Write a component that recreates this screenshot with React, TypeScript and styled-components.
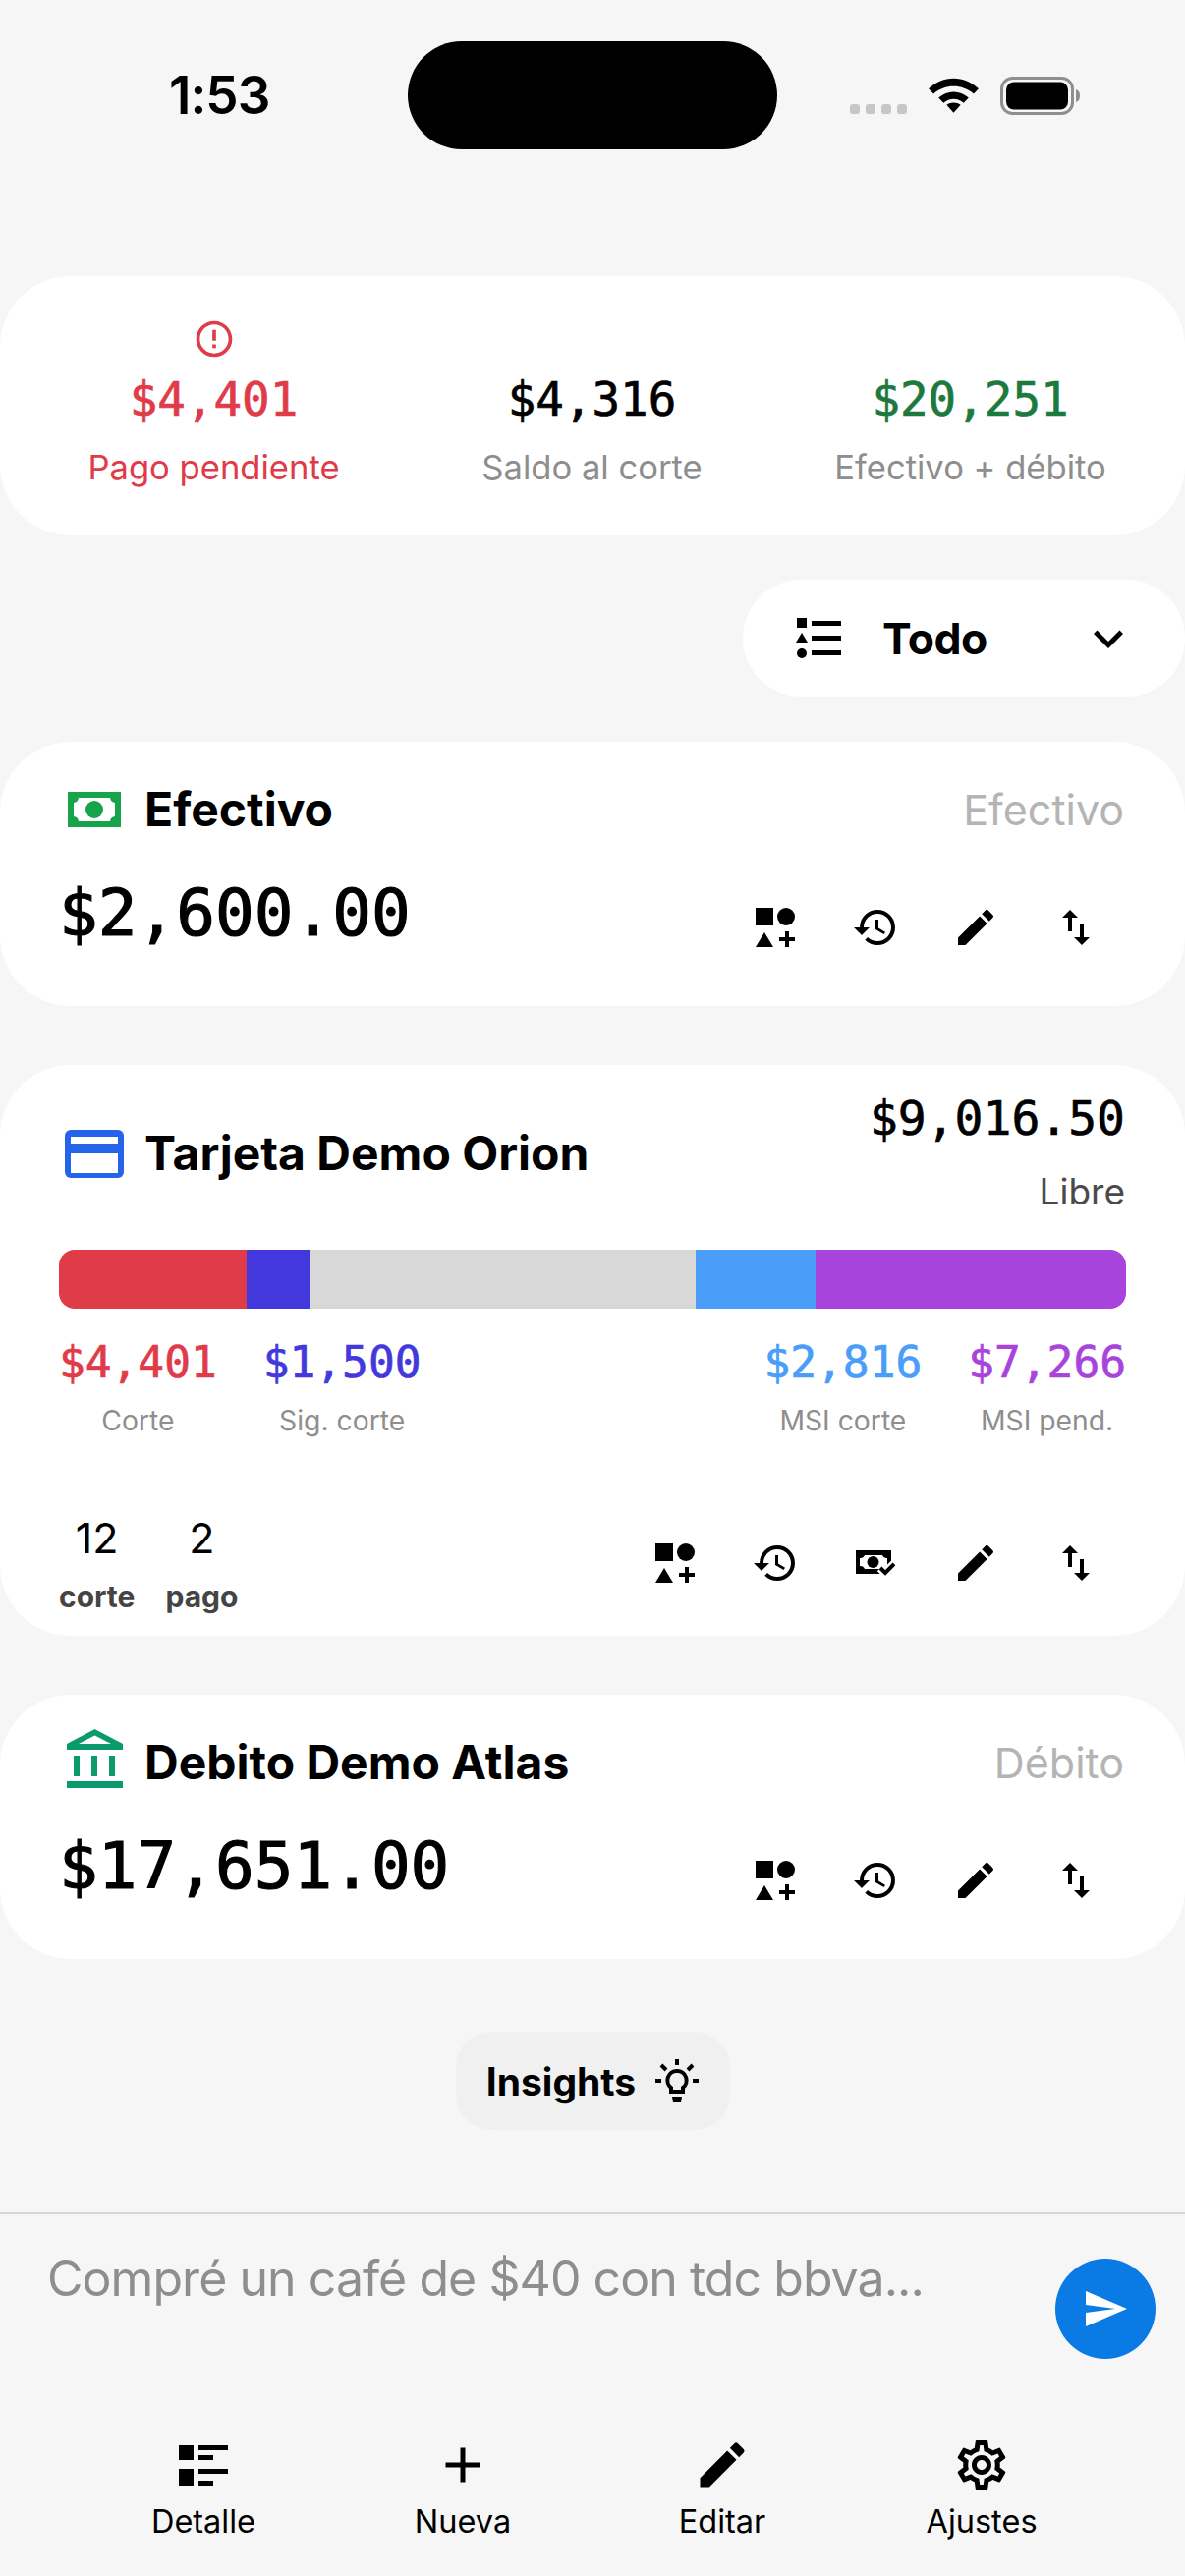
import React from "react";
import styled, { createGlobalStyle } from "styled-components";
import {
  MdAdd,
  MdEdit,
  MdErrorOutline,
  MdHistory,
  MdKeyboardArrowDown,
  MdOutlineSettings,
  MdSend,
  MdSwapVert,
} from "react-icons/md";

const MONO = `"DejaVu Sans Mono", "Liberation Mono", monospace`;

const GlobalStyle = createGlobalStyle`
  html, body {
    margin: 0;
    padding: 0;
    background: #f6f6f6;
  }
  body {
    font-family: Inter, "Liberation Sans", sans-serif;
    color: #000;
  }
`;

const Screen = styled.div`
  width: 1206px;
  height: 2622px;
  overflow: hidden;
  background: #f6f6f6;
  display: flex;
  flex-direction: column;
`;

const StatusBar = styled.div`
  height: 281px;
  flex-shrink: 0;
  padding: 42px 0 0 172px;
  box-sizing: border-box;
  display: flex;
  align-items: flex-start;
`;

const Time = styled.div`
  width: 243px;
  font-size: 53px;
  line-height: 110px;
  font-weight: 600;
  letter-spacing: -1px;
`;

const Island = styled.div`
  width: 376px;
  height: 110px;
  border-radius: 55px;
  background: #000;
`;

const StatusIcons = styled.div`
  margin-left: 74px;
  height: 110px;
  display: flex;
  align-items: center;
  gap: 22px;
`;

const SignalDots = styled.div`
  display: flex;
  gap: 6px;
  align-self: flex-end;
  margin-bottom: 36px;
`;

const SignalDot = styled.span`
  width: 10px;
  height: 10px;
  border-radius: 3px;
  background: #c6c6c6;
`;

const Summary = styled.section`
  height: 264px;
  flex-shrink: 0;
  box-sizing: border-box;
  background: #fff;
  border-radius: 72px;
  padding: 44px 26px 0 25px;
  display: grid;
  grid-template-columns: repeat(3, 1fr);
`;

const SummaryItem = styled.div`
  display: flex;
  flex-direction: column;
  align-items: center;
  white-space: nowrap;
`;

const AlertSlot = styled.div`
  height: 40px;
  color: #e03b49;
  font-size: 44px;
  display: flex;
  align-items: center;
`;

const SummaryValue = styled.div<{ $color: string }>`
  color: ${({ $color }) => $color};
  font-family: ${MONO};
  font-size: 47.5px;
  line-height: 60px;
  -webkit-text-stroke: 0.7px ${({ $color }) => $color};
  margin-top: 12px;
`;

const SummaryLabel = styled.div<{ $color: string }>`
  color: ${({ $color }) => $color};
  font-size: 34.6px;
  line-height: 44px;
  margin-top: 16px;
`;

const FilterRow = styled.div`
  display: flex;
  justify-content: flex-end;
  margin-top: 45px;
  flex-shrink: 0;
`;

const Filter = styled.div`
  width: 450px;
  height: 119px;
  box-sizing: border-box;
  background: #fff;
  border-radius: 60px;
  display: flex;
  align-items: center;
  padding: 0 48px 0 54px;

  svg {
    flex-shrink: 0;
  }
`;

const FilterLabel = styled.div`
  flex: 1;
  margin-left: 42px;
  font-size: 44.5px;
  font-weight: 700;
  letter-spacing: -0.5px;
`;

const Card = styled.section<{ $height: number; $top: number }>`
  height: ${({ $height }) => $height}px;
  margin-top: ${({ $top }) => $top}px;
  flex-shrink: 0;
  box-sizing: border-box;
  background: #fff;
  border-radius: 72px;
  padding: 0 60px;
  display: flex;
  flex-direction: column;
`;

const CardHeader = styled.div`
  display: flex;
  align-items: center;
  justify-content: space-between;
  height: 50px;
  margin-top: 44px;
`;

const CardTitleGroup = styled.div`
  display: flex;
  align-items: center;
  gap: 21px;
`;

const CardIcon = styled.div`
  width: 60px;
  margin-left: 6px;
  display: flex;
  justify-content: center;
  align-items: center;
`;

const CardTitle = styled.div`
  font-size: 48px;
  line-height: 56px;
  font-weight: 700;
  white-space: nowrap;
`;

const CardKind = styled.div`
  font-size: 43px;
  color: #b4b4b4;
  margin-right: 2px;
`;

const CardBody = styled.div`
  display: flex;
  align-items: center;
  justify-content: space-between;
  margin-top: 41px;
`;

const Balance = styled.div`
  font-family: ${MONO};
  font-size: 66px;
  line-height: 80px;
  -webkit-text-stroke: 1.2px #000;
`;

const Actions = styled.div`
  display: flex;
  align-items: center;
  gap: 62px;
  padding-right: 31px;
  padding-top: 28px;
`;

const ActionSlot = styled.div`
  width: 40px;
  height: 40px;
  display: flex;
  align-items: center;
  justify-content: center;

  svg {
    flex-shrink: 0;
  }
`;

const CreditHeader = styled.div`
  display: flex;
  align-items: flex-start;
  justify-content: space-between;
  padding-top: 24px;
`;

const CreditTitleGroup = styled(CardTitleGroup)`
  padding-top: 38px;
`;

const AvailableBox = styled.div`
  text-align: right;
`;

const AvailableValue = styled.div`
  font-family: ${MONO};
  font-size: 48px;
  line-height: 60px;
  margin-right: 1px;
  -webkit-text-stroke: 0.7px #000;
`;

const AvailableLabel = styled.div`
  font-size: 37px;
  line-height: 46px;
  color: #4a4a4a;
  margin-top: 22px;
  margin-right: 1px;
`;

const UsageBar = styled.div`
  height: 60px;
  margin-top: 36px;
  border-radius: 16px;
  overflow: hidden;
  display: flex;
`;

const UsageSegment = styled.div<{ $color: string; $width: number }>`
  width: ${({ $width }) => $width}px;
  flex-shrink: 0;
  background: ${({ $color }) => $color};
`;

const Legend = styled.div`
  display: flex;
  justify-content: space-between;
  margin-top: 25px;
`;

const LegendGroup = styled.div`
  display: flex;
  gap: 47px;
`;

const LegendItem = styled.div`
  display: flex;
  flex-direction: column;
  align-items: center;
  white-space: nowrap;
`;

const LegendValue = styled.div<{ $color: string }>`
  font-family: ${MONO};
  font-size: 44.5px;
  line-height: 60px;
  -webkit-text-stroke: 0.7px ${({ $color }) => $color};
  color: ${({ $color }) => $color};
`;

const LegendLabel = styled.div`
  font-size: 28.3px;
  line-height: 38px;
  color: #8e8e8e;
  margin-top: 10px;
`;

const CreditFooter = styled.div`
  display: flex;
  align-items: center;
  justify-content: space-between;
  margin-top: 75px;

  ${Actions} {
    padding-top: 0;
    padding-bottom: 2px;
  }
`;

const Dates = styled.div`
  display: flex;
  gap: 31px;
`;

const DateItem = styled.div`
  display: flex;
  flex-direction: column;
  align-items: center;
`;

const DateNumber = styled.div`
  font-size: 43px;
  line-height: 50px;
`;

const DateLabel = styled.div`
  font-size: 30px;
  line-height: 38px;
  font-weight: 700;
  color: #444;
  margin-top: 16px;
`;

const InsightsRow = styled.div`
  display: flex;
  justify-content: center;
  margin-top: 74px;
  flex-shrink: 0;
`;

const InsightsButton = styled.div`
  width: 279px;
  height: 100px;
  box-sizing: border-box;
  background: #f0f0f0;
  border-radius: 36px;
  display: flex;
  align-items: center;
  justify-content: center;
  gap: 20px;
  font-size: 39px;
  font-weight: 700;
`;

const Composer = styled.div`
  margin-top: 83px;
  height: 160px;
  flex-shrink: 0;
  box-sizing: border-box;
  border-top: 3px solid #d6d6d6;
  padding: 0 30px 0 48px;
  display: flex;
  align-items: flex-start;
  justify-content: space-between;
`;

const Placeholder = styled.div`
  font-size: 50px;
  line-height: 60px;
  letter-spacing: -0.95px;
  margin-top: 35px;
  color: #8e8e8e;
  white-space: nowrap;
`;

const SendButton = styled.div`
  width: 102px;
  height: 102px;
  margin-top: 45px;
  border-radius: 50%;
  background: #0a7ae4;
  color: #fff;
  display: flex;
  align-items: center;
  justify-content: center;
  font-size: 48px;
`;

const TabBar = styled.nav`
  display: grid;
  grid-template-columns: repeat(4, 264px);
  padding: 0 75px;
  margin-top: 68px;
`;

const Tab = styled.div`
  display: flex;
  flex-direction: column;
  align-items: center;
`;

const TabIcon = styled.div`
  height: 60px;
  font-size: 60px;
  display: flex;
  align-items: center;
  justify-content: center;
`;

const TabLabel = styled.div`
  font-size: 32.5px;
  line-height: 40px;
  margin-top: 8px;
`;

const ShapesAddIcon = () => (
  <svg width="40" height="40" viewBox="0 0 40 40" fill="#000">
    <rect x="0" y="0" width="18" height="18" />
    <circle cx="31" cy="9" r="9" />
    <path d="M0 40 L9 25 L18 40 Z" />
    <path d="M30 24h4v6h6v4h-6v6h-4v-6h-6v-4h6z" />
  </svg>
);

const BillCheckIcon = () => (
  <svg width="40" height="26" viewBox="0 0 40 26">
    <rect x="0" y="0" width="36" height="24" fill="#000" />
    <path
      d="M9 5h18a5 5 0 0 0 5 3v8a5 5 0 0 0-5 3H9a5 5 0 0 0-5-3V8a5 5 0 0 0 5-3z"
      fill="#fff"
    />
    <circle cx="17.500" cy="12" r="6" fill="#000" />
    <path d="M25 18l5 5 9-9" fill="none" stroke="#fff" strokeWidth="9" />
    <path d="M25 18l5 5 9-9" fill="none" stroke="#000" strokeWidth="4" />
  </svg>
);

const actionIcons = {
  shapes: <ShapesAddIcon />,
  history: <MdHistory size={48} />,
  bill: <BillCheckIcon />,
  edit: <MdEdit size={48} />,
  swap: <MdSwapVert size={48} />,
};

type ActionName = keyof typeof actionIcons;

const ActionIcons = ({ names }: { names: ActionName[] }) => (
  <Actions>
    {names.map((name) => (
      <ActionSlot key={name}>{actionIcons[name]}</ActionSlot>
    ))}
  </Actions>
);

const CashIcon = () => (
  <svg width="54" height="36" viewBox="0 0 54 36">
    <rect width="54" height="36" fill="#16a34a" />
    <path
      d="M11 6h32a6 6 0 0 0 5 5v14a6 6 0 0 0-5 5H11a6 6 0 0 0-5-5V11a6 6 0 0 0 5-5z"
      fill="#fff"
    />
    <ellipse cx="27" cy="18" rx="9" ry="9" fill="#16a34a" />
  </svg>
);

const CreditCardIcon = () => (
  <svg width="60" height="49" viewBox="0 0 60 49">
    <rect width="60" height="49" rx="6" fill="#2563eb" />
    <rect x="6" y="7" width="48" height="7" fill="#fff" />
    <rect x="6" y="24" width="48" height="20" fill="#fff" />
  </svg>
);

const BankIcon = () => (
  <svg width="57" height="68" viewBox="0 0 57 68" fill="#0b9a6d">
    <path d="M0 15 L28.500 0 L57 15 V21 H0 Z" />
    <path d="M12 15 L28.500 6.500 L45 15 Z" fill="#fff" />
    <rect x="7" y="27" width="6" height="21" />
    <rect x="25" y="27" width="6" height="21" />
    <rect x="43" y="27" width="6" height="21" />
    <rect x="0" y="53" width="57" height="7" />
  </svg>
);

const ListShapesIcon = () => (
  <svg width="46" height="41" viewBox="0 0 46 41" fill="#000">
    <rect x="1" y="0" width="10" height="10" />
    <path d="M0 25 L6 15 L12 25 Z" />
    <circle cx="6" cy="36" r="5" />
    <rect x="16" y="3" width="30" height="5" />
    <rect x="16" y="18" width="30" height="5" />
    <rect x="16" y="33" width="30" height="5" />
  </svg>
);

const BulbIcon = () => (
  <svg width="44" height="44" viewBox="0 0 44 44" fill="none" stroke="#000" strokeWidth="4">
    <path d="M22 12a9.500 9.500 0 0 0-6 17v4h12v-4a9.500 9.500 0 0 0-6-17z" />
    <path d="M17 38h10l-1 6h-8z" fill="#000" stroke="none" />
    <path d="M22 0v6M6 6l5 5M38 6l-5 5M0 22h6M38 22h6" />
  </svg>
);

const DetailIcon = () => (
  <svg width="50" height="41" viewBox="0 0 50 41" fill="#000">
    <rect x="0" y="0" width="15" height="15" />
    <rect x="20" y="0" width="30" height="5" />
    <rect x="20" y="10" width="15" height="5" />
    <rect x="0" y="24" width="15" height="17" />
    <rect x="20" y="24" width="30" height="5" />
    <rect x="20" y="36" width="15" height="5" />
  </svg>
);

const WifiIcon = () => (
  <svg width="51" height="37" viewBox="0 0 50 36" fill="#000">
    <path d="M0 11C14-3 36-3 50 11l-5 5C33 6 17 6 5 16z" />
    <path d="M10 20c9-8 21-8 30 0l-5 5c-6-5-14-5-20 0z" />
    <path d="M18 27c4-3 10-3 14 0l-7 8z" />
  </svg>
);

const BatteryIcon = () => (
  <svg width="82" height="39" viewBox="0 0 82 39">
    <rect x="1.500" y="1.500" width="72" height="36" rx="11" fill="none" stroke="#8e8e8e" strokeWidth="3" />
    <rect x="6" y="5.500" width="63" height="28" rx="8" fill="#000" />
    <path d="M77 13c3 1 4 3 4 6.500s-1 5.500-4 6.500z" fill="#8e8e8e" />
  </svg>
);

const App: React.FC = () => (
  <Screen>
    <GlobalStyle />
    <StatusBar>
      <Time>1:53</Time>
      <Island />
      <StatusIcons>
        <SignalDots>
          <SignalDot />
          <SignalDot />
          <SignalDot />
          <SignalDot />
        </SignalDots>
        <WifiIcon />
        <BatteryIcon />
      </StatusIcons>
    </StatusBar>

    <Summary>
      <SummaryItem>
        <AlertSlot>
          <MdErrorOutline />
        </AlertSlot>
        <SummaryValue $color="#e03b49">$4,401</SummaryValue>
        <SummaryLabel $color="#e03b49">Pago pendiente</SummaryLabel>
      </SummaryItem>
      <SummaryItem>
        <AlertSlot />
        <SummaryValue $color="#000">$4,316</SummaryValue>
        <SummaryLabel $color="#8e8e8e">Saldo al corte</SummaryLabel>
      </SummaryItem>
      <SummaryItem>
        <AlertSlot />
        <SummaryValue $color="#1d7a3e">$20,251</SummaryValue>
        <SummaryLabel $color="#8e8e8e">Efectivo + débito</SummaryLabel>
      </SummaryItem>
    </Summary>

    <FilterRow>
      <Filter>
        <ListShapesIcon />
        <FilterLabel>Todo</FilterLabel>
        <MdKeyboardArrowDown size={60} />
      </Filter>
    </FilterRow>

    <Card $height={269} $top={46}>
      <CardHeader>
        <CardTitleGroup>
          <CardIcon>
            <CashIcon />
          </CardIcon>
          <CardTitle>Efectivo</CardTitle>
        </CardTitleGroup>
        <CardKind>Efectivo</CardKind>
      </CardHeader>
      <CardBody>
        <Balance>$2,600.00</Balance>
        <ActionIcons names={["shapes", "history", "edit", "swap"]} />
      </CardBody>
    </Card>

    <Card $height={581} $top={60}>
      <CreditHeader>
        <CreditTitleGroup>
          <CardIcon>
            <CreditCardIcon />
          </CardIcon>
          <CardTitle>Tarjeta Demo Orion</CardTitle>
        </CreditTitleGroup>
        <AvailableBox>
          <AvailableValue>$9,016.50</AvailableValue>
          <AvailableLabel>Libre</AvailableLabel>
        </AvailableBox>
      </CreditHeader>
      <UsageBar>
        <UsageSegment $color="#e03b49" $width={191} />
        <UsageSegment $color="#4338dd" $width={65} />
        <UsageSegment $color="#d8d8d8" $width={392} />
        <UsageSegment $color="#4a9df8" $width={122} />
        <UsageSegment $color="#a844dc" $width={316} />
      </UsageBar>
      <Legend>
        <LegendGroup>
          <LegendItem>
            <LegendValue $color="#e03b49">$4,401</LegendValue>
            <LegendLabel>Corte</LegendLabel>
          </LegendItem>
          <LegendItem>
            <LegendValue $color="#4338dd">$1,500</LegendValue>
            <LegendLabel>Sig. corte</LegendLabel>
          </LegendItem>
        </LegendGroup>
        <LegendGroup>
          <LegendItem>
            <LegendValue $color="#4a9df8">$2,816</LegendValue>
            <LegendLabel>MSI corte</LegendLabel>
          </LegendItem>
          <LegendItem>
            <LegendValue $color="#a844dc">$7,266</LegendValue>
            <LegendLabel>MSI pend.</LegendLabel>
          </LegendItem>
        </LegendGroup>
      </Legend>
      <CreditFooter>
        <Dates>
          <DateItem>
            <DateNumber>12</DateNumber>
            <DateLabel>corte</DateLabel>
          </DateItem>
          <DateItem>
            <DateNumber>2</DateNumber>
            <DateLabel>pago</DateLabel>
          </DateItem>
        </Dates>
        <ActionIcons names={["shapes", "history", "bill", "edit", "swap"]} />
      </CreditFooter>
    </Card>

    <Card $height={269} $top={60}>
      <CardHeader>
        <CardTitleGroup>
          <CardIcon>
            <BankIcon />
          </CardIcon>
          <CardTitle>Debito Demo Atlas</CardTitle>
        </CardTitleGroup>
        <CardKind>Débito</CardKind>
      </CardHeader>
      <CardBody>
        <Balance>$17,651.00</Balance>
        <ActionIcons names={["shapes", "history", "edit", "swap"]} />
      </CardBody>
    </Card>

    <InsightsRow>
      <InsightsButton>
        Insights
        <BulbIcon />
      </InsightsButton>
    </InsightsRow>

    <Composer>
      <Placeholder>Compré un café de $40 con tdc bbva...</Placeholder>
      <SendButton>
        <MdSend />
      </SendButton>
    </Composer>

    <TabBar>
      <Tab>
        <TabIcon>
          <DetailIcon />
        </TabIcon>
        <TabLabel>Detalle</TabLabel>
      </Tab>
      <Tab>
        <TabIcon>
          <MdAdd />
        </TabIcon>
        <TabLabel>Nueva</TabLabel>
      </Tab>
      <Tab>
        <TabIcon>
          <MdEdit />
        </TabIcon>
        <TabLabel>Editar</TabLabel>
      </Tab>
      <Tab>
        <TabIcon>
          <MdOutlineSettings />
        </TabIcon>
        <TabLabel>Ajustes</TabLabel>
      </Tab>
    </TabBar>
  </Screen>
);

export default App;
